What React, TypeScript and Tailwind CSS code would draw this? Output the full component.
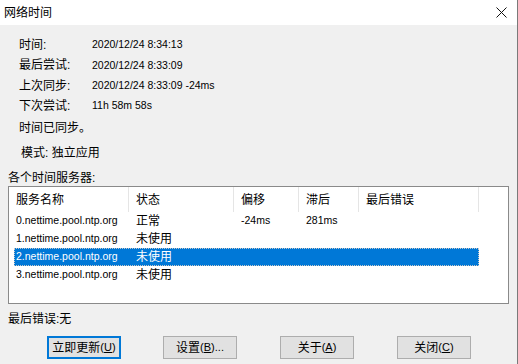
import React from "react";

const F = { fontFamily: '"Liberation Sans", "Noto Sans CJK SC", sans-serif' };

function Btn({ label, k, rest, primary }: { label: string; k: string; rest?: string; primary?: boolean }) {
  return (
    <div
      className={
        "w-[74px] h-[23px] flex items-center justify-center text-[12px] text-black bg-[#e1e1e1] " +
        (primary ? "border-2 border-[#0078d7]" : "border border-[#adadad]")
      }
    >
      <span>{label}</span>
      <span className="text-[11px]">
        (<span className="underline">{k}</span>){rest}
      </span>
    </div>
  );
}

export default function App() {
  const info: [string, string][] = [
    ["时间:", "2020/12/24 8:34:13"],
    ["最后尝试:", "2020/12/24 8:33:09"],
    ["上次同步:", "2020/12/24 8:33:09 -24ms"],
    ["下次尝试:", "11h 58m 58s"],
  ];
  const cols = [120, 105, 65, 60, 120];
  const heads = ["服务名称", "状态", "偏移", "滞后", "最后错误"];
  const rows = [
    ["0.nettime.pool.ntp.org", "正常", "-24ms", "281ms", ""],
    ["1.nettime.pool.ntp.org", "未使用", "", "", ""],
    ["2.nettime.pool.ntp.org", "未使用", "", "", ""],
    ["3.nettime.pool.ntp.org", "未使用", "", "", ""],
  ];
  return (
    <div style={F} className="w-[518px] h-[364px] bg-[#f0f0f0] border-r border-[#7a7a7a] flex flex-col text-black overflow-hidden">
      <div className="h-[25px] bg-white flex items-center justify-between pl-[4px] pr-[10px] shrink-0">
        <span className="text-[12px]">网络时间</span>
        <svg width="11" height="11" viewBox="0 0 11 11">
          <path d="M0.5 0.5 L10.5 10.5 M10.5 0.5 L0.5 10.5" stroke="#111" strokeWidth="1" fill="none" />
        </svg>
      </div>
      <div className="mt-[10px] pl-[19px] flex flex-col">
        {info.map(([a, b]) => (
          <div key={a} className="h-[20.3px] flex items-center">
            <span className="w-[73px] text-[12px]">{a}</span>
            <span className="text-[10.5px]">{b}</span>
          </div>
        ))}
        <div className="h-[20px] mt-[2px] flex items-center text-[12px]">时间已同步。</div>
        <div className="h-[20px] mt-[5px] pl-[2px] flex items-center text-[12px]">模式: 独立应用</div>
      </div>
      <div className="h-[16px] mt-[7px] pl-[8px] flex items-center text-[12px]">各个时间服务器:</div>
      <div className="ml-[8px] w-[501px] h-[118px] border border-[#8a8a8a] bg-white flex flex-col">
        <div className="h-[25px] flex shrink-0">
          {heads.map((h, i) => (
            <div
              key={h}
              style={{ width: cols[i] }}
              className="h-full flex items-center pl-[7px] text-[12px] border-r border-[#e5e5e5]"
            >
              {h}
            </div>
          ))}
        </div>
        {rows.map((r, ri) => {
          const sel = ri === 2;
          return (
            <div key={ri} className="h-[18px] flex">
              <div
                className={
                  "flex h-full ml-[5px] " +
                  (sel ? "bg-[#0078d7] text-white outline outline-1 outline-dotted outline-[#c8c8c8] -outline-offset-1" : "")
                }
              >
                {r.map((c, ci) => (
                  <div
                    key={ci}
                    style={{ width: ci === 0 ? cols[0] - 5 : cols[ci] }}
                    className={
                      "h-full flex items-center " +
                      (ci === 0 ? "pl-[2px] " : "pl-[7px] ") +
                      (ci === 1 ? "text-[12px]" : "text-[10.5px]")
                    }
                  >
                    {c}
                  </div>
                ))}
              </div>
            </div>
          );
        })}
      </div>
      <div className="h-[16px] mt-[7px] pl-[8px] flex items-center text-[12px]">最后错误:无</div>
      <div className="mt-[9px] flex pl-[47px]">
        <Btn label="立即更新" k="U" primary />
        <div className="ml-[42px]">
          <Btn label="设置" k="B" rest="..." />
        </div>
        <div className="ml-[43px]">
          <Btn label="关于" k="A" />
        </div>
        <div className="ml-[43px]">
          <Btn label="关闭" k="C" />
        </div>
      </div>
    </div>
  );
}
